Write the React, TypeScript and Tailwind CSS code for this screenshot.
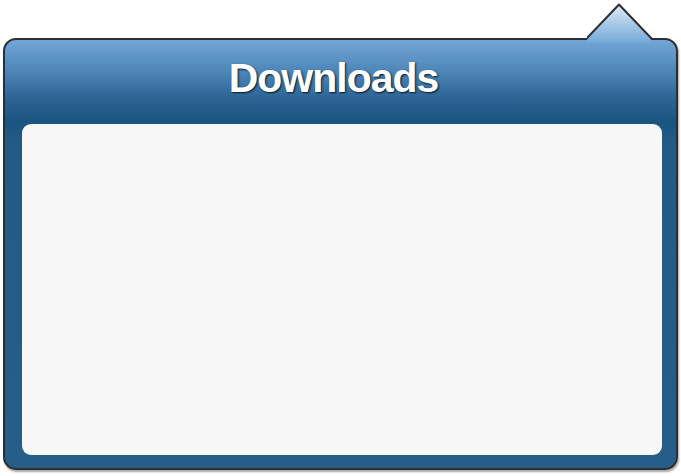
export default function App() {
  return (
    <div className="w-[681px] h-[476px] bg-white pt-[38px] pl-[3px] font-['Liberation_Sans',Arial,sans-serif]">
      <div className="relative w-[675px] h-[432px] rounded-[13px] border-2 border-[#2e2e2e] bg-[linear-gradient(180deg,#72a6d6_0px,#4f87b9_30px,#2a6393_60px,#1c5480_82px,#235b86_100px,#265e89_100%)] shadow-[1px_2px_2px_rgba(0,0,0,0.35)] flex flex-col">
        {/* pointer */}
        <svg className="absolute left-[582px] top-[-37px]" width="66" height="40" viewBox="0 0 66 40">
          <defs>
            <linearGradient id="tip" x1="0" y1="0" x2="0" y2="1">
              <stop offset="0" stopColor="#dcebf8" />
              <stop offset="1" stopColor="#74a8d7" />
            </linearGradient>
          </defs>
          <polygon points="0,40 0,36 32,1.5 64,36 64,40" fill="url(#tip)" />
          <polyline points="-1,36 32,1.5 65,36" fill="none" stroke="#2e2e2e" strokeWidth="2" strokeLinejoin="round" />
        </svg>

        <div className="h-[84px] pt-[18px] pr-[14px] text-center">
          <h1 className="text-[41px] leading-[41px] font-bold tracking-[-1px] text-white [text-shadow:1px_1px_2px_rgba(0,0,0,0.85)]">
            Downloads
          </h1>
        </div>

        <div className="ml-[17px] mr-[14px] h-[331px] rounded-[9px] bg-[#f7f7f8]" />
      </div>
    </div>
  );
}
